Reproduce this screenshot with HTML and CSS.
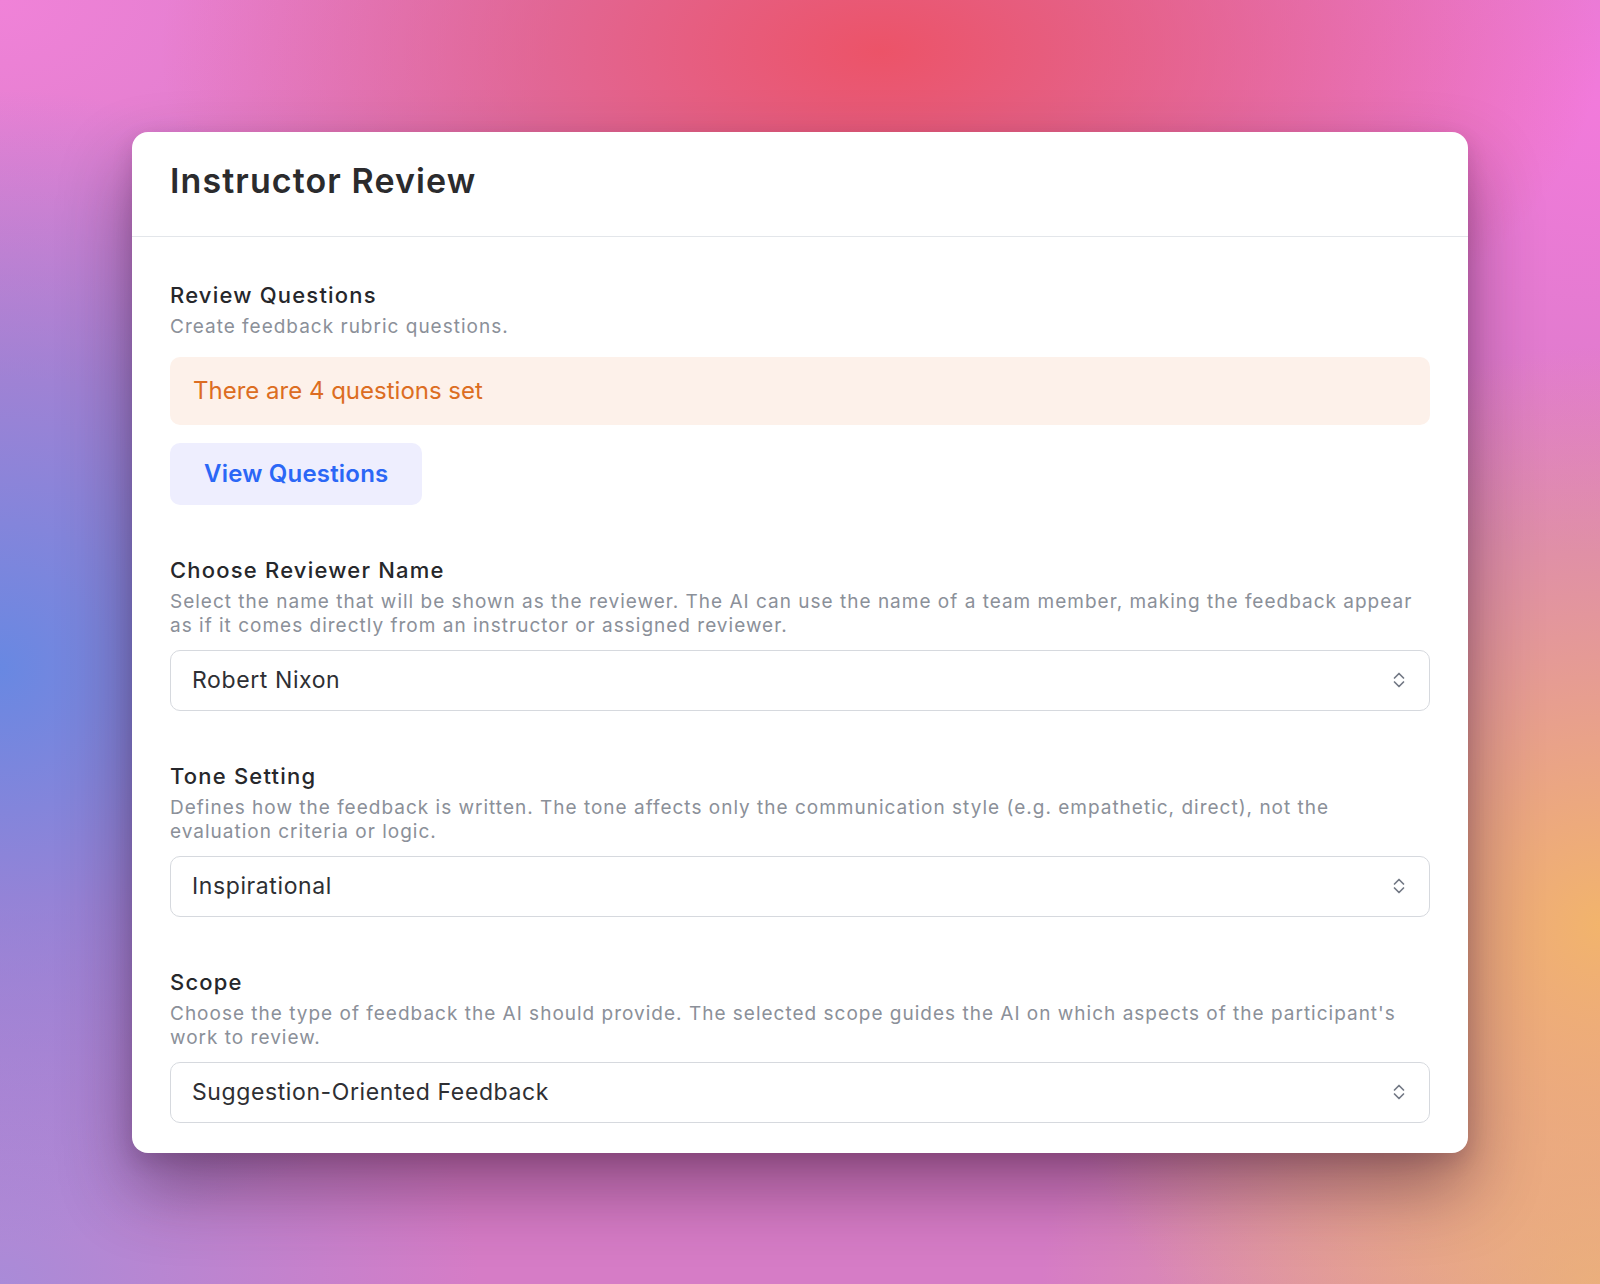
FILE: index.html
```html
<!DOCTYPE html>
<html lang="en">
<head>
  <meta charset="UTF-8">
  <meta name="viewport" content="width=device-width, initial-scale=1.0">
  <title>Instructor Review</title>
  <link rel="stylesheet" href="styles.css">
</head>
<body>

  <main class="card">
    <header class="card-head">
      <h1>Instructor Review</h1>
    </header>

    <div class="card-body">
      <section class="field">
        <h2>Review Questions</h2>
        <p class="hint">Create feedback rubric questions.</p>
        <div class="notice">There are 4 questions set</div>
        <button class="btn-soft" type="button">View Questions</button>
      </section>

      <section class="field">
        <h2>Choose Reviewer Name</h2>
        <p class="hint">Select the name that will be shown as the reviewer. The AI can use the name of a team member, making the feedback appear as if it comes directly from an instructor or assigned reviewer.</p>
        <div class="select">
          <span>Robert Nixon</span>
          <svg class="updown" viewBox="0 0 12 18" width="12" height="18"><path d="M1.5 7 6 2.5 10.5 7M1.5 11 6 15.5 10.5 11"/></svg>
        </div>
      </section>

      <section class="field">
        <h2>Tone Setting</h2>
        <p class="hint">Defines how the feedback is written. The tone affects only the communication style (e.g. empathetic, direct), not the evaluation criteria or logic.</p>
        <div class="select">
          <span>Inspirational</span>
          <svg class="updown" viewBox="0 0 12 18" width="12" height="18"><path d="M1.5 7 6 2.5 10.5 7M1.5 11 6 15.5 10.5 11"/></svg>
        </div>
      </section>

      <section class="field">
        <h2>Scope</h2>
        <p class="hint">Choose the type of feedback the AI should provide. The selected scope guides the AI on which aspects of the participant's work to review.</p>
        <div class="select">
          <span>Suggestion-Oriented Feedback</span>
          <svg class="updown" viewBox="0 0 12 18" width="12" height="18"><path d="M1.5 7 6 2.5 10.5 7M1.5 11 6 15.5 10.5 11"/></svg>
        </div>
      </section>
    </div>
  </main>

</body>
</html>
```

FILE: styles.css
```css
body {
  margin: 0;
  height: 1284px;
  padding-top: 132px;
  box-sizing: border-box;
  font-family: Inter, "Noto Sans", sans-serif;
  background-color: #d67cc6;
  background-image:
    radial-gradient(ellipse 45% 30% at 55% 4%, #ec5368 0%, rgba(236,83,104,0) 100%),
    radial-gradient(ellipse 38% 45% at 0% 52%, #6888e2 0%, rgba(104,136,226,0) 100%),
    radial-gradient(ellipse 35% 45% at 100% 72%, #f2b46c 0%, rgba(242,180,108,0) 100%),
    radial-gradient(ellipse 35% 35% at 100% 8%, #f27adb 0%, rgba(242,122,219,0) 100%),
    radial-gradient(ellipse 35% 30% at 0% 0%, #f082d8 0%, rgba(240,130,216,0) 100%),
    radial-gradient(ellipse 30% 30% at 0% 100%, #a98bd8 0%, rgba(169,139,216,0) 100%),
    radial-gradient(ellipse 35% 30% at 100% 100%, #e6ac86 0%, rgba(230,172,134,0) 100%);
  overflow: hidden;
}

.card {
  width: 1336px;
  margin: 0 auto;
  background: #fff;
  border-radius: 16px;
  box-shadow: 0 36px 70px rgba(50, 15, 45, 0.45), 0 8px 20px rgba(50, 15, 45, 0.15);
  overflow: hidden;
}

.card-head {
  padding: 29px 38px 35px;
  border-bottom: 1px solid #e3e6ea;
}
.card-head h1 {
  margin: 0;
  font-size: 34px;
  line-height: 40px;
  font-weight: 600;
  color: #2b2b2d;
  letter-spacing: 1.1px;
}

.card-body {
  padding: 44px 38px 30px;
  display: flex;
  flex-direction: column;
  gap: 51px;
}

.field h2 {
  margin: 0;
  font-size: 22px;
  line-height: 28px;
  font-weight: 500;
  color: #26272b;
  letter-spacing: 1.2px;
}
.hint {
  margin: 6px 0 11px;
  font-size: 19px;
  line-height: 24.5px;
  color: #8b9099;
  letter-spacing: 1px;
}

.notice {
  margin-top: 17px;
  padding: 19px 23px;
  background: #fdf1ea;
  border-radius: 10px;
  color: #dc6d22;
  font-size: 24px;
  line-height: 30px;
}

.btn-soft {
  margin-top: 18px;
  height: 62px;
  padding: 0 34px;
  border: 0;
  border-radius: 10px;
  background: #eeeefe;
  color: #2b67f6;
  font-family: inherit;
  font-size: 24px;
  font-weight: 600;
  letter-spacing: 0.2px;
  cursor: pointer;
}

.select {
  height: 61px;
  box-sizing: border-box;
  padding: 0 24px 0 21px;
  border: 1.5px solid #d6d9de;
  border-radius: 10px;
  display: flex;
  align-items: center;
  justify-content: space-between;
  font-size: 23px;
  color: #2e2f33;
  letter-spacing: 0.6px;
}
.updown {
  fill: none;
  stroke: #737985;
  stroke-width: 1.7;
  stroke-linecap: round;
  stroke-linejoin: round;
}
```
